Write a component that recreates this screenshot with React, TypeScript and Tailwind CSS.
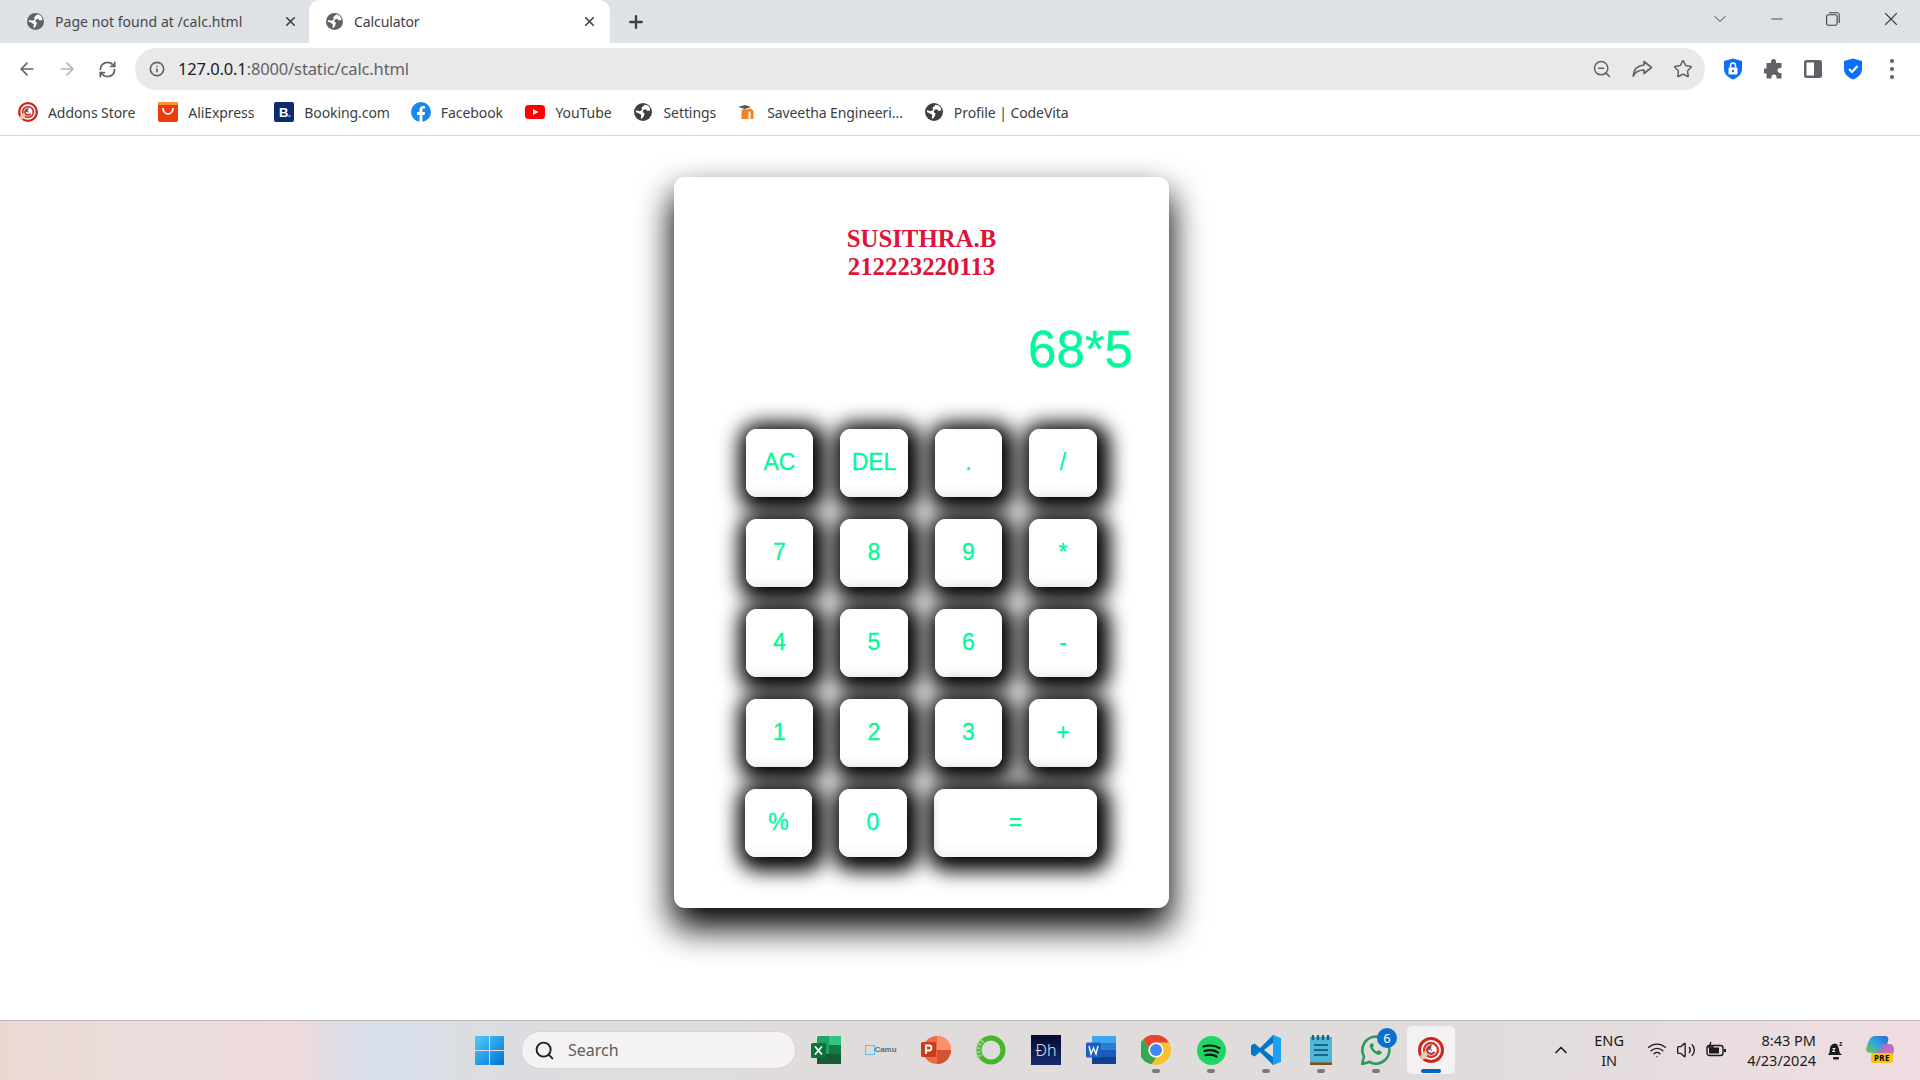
import { ArrowLeft, ArrowRight, RefreshCw, Info, ZoomOut, Star, X, Plus, ChevronDown, ChevronUp, Minus, Search, Wifi, Volume2 } from 'lucide-react'
import type { ReactNode } from 'react'

const Globe = ({ color = '#5f6368', size = 17 }: { color?: string; size?: number }) => (
  <svg width={size} height={size} viewBox="0 0 16 16" className="shrink-0">
    <circle cx="8" cy="8" r="8" fill={color} />
    <path d="M9.500 1.500c3 0 5 2.500 5 5l-2.500.5-1.500-1.500-2 .5-.8 2 1.800 1.500-1 2.500-1.500 2-1-.5.500-3-2.500-1.500-2.500-1 .5-1.500 3 .8L7.500 6 6.500 4.500z" fill="#fff" />
  </svg>
)

const tile = 'w-[48px] h-[48px] flex items-center justify-center relative shrink-0'

const Pip = () => <div className="absolute bottom-[1px] left-[20px] w-[8px] h-[4px] rounded-full bg-[#7b7b7b]"></div>

const AddonsIcon = ({ size }: { size: number }) => (
  <svg width={size} height={size} viewBox="0 0 26 26" className="shrink-0">
    <circle cx="13" cy="13" r="11.500" fill="#fff" stroke="#c9281e" strokeWidth="3" />
    <circle cx="13" cy="13" r="7" fill="none" stroke="#d8382c" strokeWidth="2.400" />
    <path d="M14 6 8 14l6-2-2 6" fill="#2f6fd1" />
    <path d="M2 19l5-5 3 3-3 5-3 1z" fill="#f1c9a0" />
    <path d="M13 9a4 4 0 1 0 3.500 6" fill="none" stroke="#c9281e" strokeWidth="2" />
  </svg>
)

const Bookmark = ({ icon, label, className }: { icon: ReactNode; label: string; className: string }) => (
  <div className={`flex items-center shrink-0 ${className}`}>
    <div className="w-[20px] flex justify-center shrink-0">{icon}</div>
    <span className="ml-[10px] whitespace-nowrap">{label}</span>
  </div>
)

const Shield = ({ children }: { children: ReactNode }) => (
  <svg width="20" height="22" viewBox="0 0 20 22" className="shrink-0">
    <path d="M10 0.500 19 3v8c0 5-4 8.500-9 10.500C5 19.500 1 16 1 11V3z" fill="#0b6ffa" />
    {children}
  </svg>
)

const Key = ({ label, className = '' }: { label: string; className?: string }) => (
  <button className={`h-[68px] pb-[2px] rounded-[11px] bg-gradient-to-b from-white from-80% to-[#f6f6f6] text-[23px] text-[#00fa9a] [-webkit-text-stroke:0.3px_#00fa9a] shadow-[3px_4px_20px_10px_#000] ${className}`}>
    {label}
  </button>
)

export default function App() {
  return (
    <div className="w-[1920px] h-[1080px] flex flex-col overflow-hidden bg-white [font-family:'Noto_Sans',sans-serif]">
      {/* tab strip */}
      <div className="h-[43px] bg-[#dee1e6] flex shrink-0">
        <div className="w-[309px] pl-[27px] flex items-center text-[14px] text-[#45474a] tracking-[0.05px]">
          <Globe />
          <span className="ml-[11px] whitespace-nowrap">Page not found at /calc.html</span>
          <X size={15} strokeWidth={2.600} className="ml-auto mr-[11px] text-[#3c4043]" />
        </div>
        <div className="w-[301px] pl-[17px] flex items-center bg-white rounded-t-[11px] text-[14px] text-[#3c4043] tracking-[-0.1px]">
          <Globe />
          <span className="ml-[11px]">Calculator</span>
          <X size={15} strokeWidth={2.600} className="ml-auto mr-[13px] text-[#3c4043]" />
        </div>
        <Plus size={20} strokeWidth={2.800} className="ml-[16px] self-center text-[#3c4043]" />
        <div className="ml-auto flex items-center h-[37px] text-[#3c4043]">
          <ChevronDown size={20} strokeWidth={1.200} />
          <Minus size={18} strokeWidth={1.200} className="ml-[38px]" />
          <svg width="14" height="14" viewBox="0 0 14 14" className="ml-[40px]" fill="none" stroke="#3c4043" strokeWidth="1.100">
            <rect x="0.600" y="2.800" width="10.500" height="10.500" rx="1.800" />
            <path d="M3 0.800h8.200a2 2 0 0 1 2 2V11" />
          </svg>
          <X size={22} strokeWidth={1.200} className="ml-[40px] mr-[18px]" />
        </div>
      </div>

      {/* toolbar */}
      <div className="h-[52px] flex items-center shrink-0">
        <div className="w-[135px] pl-[17px] flex items-center shrink-0">
          <ArrowLeft size={20} strokeWidth={2} className="text-[#5f6368]" />
          <ArrowRight size={20} strokeWidth={2} className="ml-[20px] text-[#b3b5b8]" />
          <RefreshCw size={19} strokeWidth={2.200} className="ml-[21px] text-[#5f6368]" />
        </div>
        <div className="w-[1570px] h-[42px] rounded-full bg-[#e9e9e9] flex items-center pl-[14px] pr-[12px] shrink-0">
          <Info size={16} strokeWidth={2.400} className="text-[#5f6368]" />
          <span className="ml-[13px] text-[16.500px] tracking-[-0.14px] text-[#202124]">
            127.0.0.1<span className="text-[#5f6368]">:8000/static/calc.html</span>
          </span>
          <ZoomOut size={20} strokeWidth={1.800} className="ml-auto text-[#5f6368]" />
          <svg width="21" height="18" viewBox="0 0 21 18" className="ml-[20px]" fill="none" stroke="#5f6368" strokeWidth="1.700" strokeLinejoin="round">
            <path d="M12 1.500 19.500 7.500 12 13.500V10C7 10 3.500 11.500 1.200 16 1.800 9.500 5.500 5.500 12 5z" />
          </svg>
          <Star size={20} strokeWidth={1.800} className="ml-[20px] text-[#5f6368]" />
        </div>
        <div className="flex items-center ml-[18px]">
          <Shield>
            <rect x="5.500" y="9.500" width="9" height="7" rx="1" fill="#fff" />
            <path d="M7.500 9.500V7.500a2.500 2.500 0 0 1 5 0v2" fill="none" stroke="#fff" strokeWidth="1.500" />
            <circle cx="10" cy="13" r="1.200" fill="#0b6ffa" />
          </Shield>
          <svg width="20" height="20" viewBox="0 0 20 20" className="ml-[21px]">
            <path d="M7 2.500a2.500 2.500 0 0 1 5 0V4h5.500v5H16a2.500 2.500 0 0 0 0 5h1.500v5.500h-5V18a2.500 2.500 0 0 0-5 0v1.500H2.500v-5H1a2.500 2.500 0 0 1 0-5h1.500V4H7z" fill="#5f6368" />
          </svg>
          <svg width="18" height="18" viewBox="0 0 18 18" className="ml-[20px]">
            <rect width="18" height="18" rx="2.500" fill="#5f6368" />
            <rect x="2.500" y="2.500" width="7.500" height="13" fill="#fff" />
          </svg>
          <div className="ml-[21px] flex">
            <Shield>
              <path d="M6 11l3 3 5.500-6" fill="none" stroke="#fff" strokeWidth="2" />
            </Shield>
          </div>
          <div className="ml-[27px] flex flex-col gap-[4px]">
            <div className="w-[4px] h-[4px] rounded-full bg-[#5f6368]"></div>
            <div className="w-[4px] h-[4px] rounded-full bg-[#5f6368]"></div>
            <div className="w-[4px] h-[4px] rounded-full bg-[#5f6368]"></div>
          </div>
        </div>
      </div>

      {/* bookmarks */}
      <div className="h-[41px] pb-[6px] border-b border-[#d3d5d8] flex items-center text-[14px] text-[#3c4043] tracking-[-0.08px] shrink-0">
        <Bookmark className="ml-[18px]" label="Addons Store" icon={<AddonsIcon size={20} />} />
        <Bookmark
          className="ml-[23px]"
          label="AliExpress"
          icon={
            <svg width="20" height="20" viewBox="0 0 20 20">
              <rect width="20" height="20" rx="2" fill="#ee3a0c" />
              <rect width="20" height="3" rx="1" fill="#f7942e" />
              <path d="M5 6c0 8 10 8 10 0" fill="none" stroke="#fff" strokeWidth="1.800" />
            </svg>
          }
        />
        <Bookmark
          className="ml-[20px]"
          label="Booking.com"
          icon={
            <svg width="20" height="20" viewBox="0 0 20 20">
              <rect width="20" height="20" rx="2" fill="#0c2a70" />
              <text x="5" y="15" fill="#fff" fontSize="13" fontWeight="700" fontFamily="Liberation Sans">B</text>
              <circle cx="15.500" cy="14" r="1.300" fill="#3ba7ec" />
            </svg>
          }
        />
        <Bookmark
          className="ml-[21px]"
          label="Facebook"
          icon={
            <svg width="20" height="20" viewBox="0 0 20 20">
              <circle cx="10" cy="10" r="10" fill="#1a87f0" />
              <path d="M8.500 20v-7H6v-3h2.500V7.700C8.500 5.200 10 4 12.100 4c1 0 1.900.2 1.900.2v2.400h-1.100c-1.100 0-1.500.7-1.500 1.400V10H14l-.4 3h-2.200v7z" fill="#fff" />
            </svg>
          }
        />
        <Bookmark
          className="ml-[22.500px]"
          label="YouTube"
          icon={
            <svg width="20" height="20" viewBox="0 0 20 20">
              <rect y="3" width="20" height="14" rx="3.500" fill="#f00" />
              <path d="M8 7l5.500 3L8 13z" fill="#fff" />
            </svg>
          }
        />
        <Bookmark className="ml-[22px]" label="Settings" icon={<Globe color="#3c4043" size={18} />} />
        <Bookmark
          className="ml-[21px]"
          label="Saveetha Engineeri..."
          icon={
            <svg width="20" height="20" viewBox="0 0 20 20">
              <path d="M1 5l7-2 6 2-6 2z" fill="#555" />
              <path d="M6 17V10c0-2 3-2 3 0v7M10 17V10c0-2 4-3 5 0v7" fill="none" stroke="#f58220" strokeWidth="3" />
            </svg>
          }
        />
        <Bookmark className="ml-[21px]" label="Profile | CodeVita" icon={<Globe color="#3c4043" size={18} />} />
      </div>

      {/* page */}
      <div className="flex-1 pt-[41px] pl-[674px]">
        <div className="w-[495px] h-[731px] bg-white rounded-[11px] shadow-[0_18px_34px_2px_#000] pt-[48px] flex flex-col">
          <div className="[font-family:'Liberation_Serif',serif] font-bold text-[24.800px] leading-[28px] text-[#dc143c] text-center">
            <div>SUSITHRA.B</div>
            <div>212223220113</div>
          </div>
          <div className="mt-[39px] h-[60px] pr-[36px] text-right text-[51px] leading-[60px] text-[#00fa9a] [-webkit-text-stroke:0.3px_#00fa9a] [font-family:'Liberation_Sans',sans-serif]">
            68*5
          </div>
          <div className="mt-[49px] ml-[72px] grid grid-cols-[67px_68px_67px_68px] gap-x-[27px] gap-y-[22px] w-[351px] [font-family:'Liberation_Sans',sans-serif]">
            <Key label="AC" />
            <Key label="DEL" />
            <Key label="." />
            <Key label="/" />
            <Key label="7" />
            <Key label="8" />
            <Key label="9" />
            <Key label="*" />
            <Key label="4" />
            <Key label="5" />
            <Key label="6" />
            <Key label="-" />
            <Key label="1" />
            <Key label="2" />
            <Key label="3" />
            <Key label="+" />
            <Key label="%" className="-translate-x-px" />
            <Key label="0" className="-translate-x-px" />
            <Key label="=" className="col-span-2 -ml-px" />
          </div>
        </div>
      </div>

      {/* taskbar */}
      <div className="h-[60px] shrink-0 border-t border-[#bdb9ba] pb-[1px] bg-[linear-gradient(90deg,#ead9d2_0px,#ecdcdb_130px,#ecdadc_300px,#d9dfeb_360px,#d9dfeb_420px,#dcdde2_460px,#e0dcdb_800px,#e1dcdc_1500px,#efdde1_1900px)] flex items-center pl-[465px]">
        <div className={tile}>
          <svg width="29" height="29" viewBox="0 0 29 29">
            <defs>
              <linearGradient id="win" x1="0" y1="0" x2="1" y2="1">
                <stop offset="0" stopColor="#4fcbfa" />
                <stop offset="1" stopColor="#0172d4" />
              </linearGradient>
            </defs>
            <path d="M0 1a1 1 0 0 1 1-1h13v14H0zM15 0h13a1 1 0 0 1 1 1v13H15zM0 15h14v14H1a1 1 0 0 1-1-1zM15 15h14v13a1 1 0 0 1-1 1H15z" fill="url(#win)" />
          </svg>
        </div>
        <div className="ml-[8px] w-[275px] h-[38px] rounded-full bg-[#f4f2f2] border border-[#d8d4d4] flex items-center pl-[12px] text-[16px] text-[#5d5d5d]">
          <Search size={21} strokeWidth={2.200} className="text-[#222]" />
          <span className="ml-[13px]">Search</span>
        </div>
        <div className="ml-[6px] flex gap-[7px]">
          <div className={tile}>
            <svg width="30" height="28" viewBox="0 0 30 28">
              <rect x="6" width="24" height="28" rx="1.500" fill="#21a366" />
              <rect x="18" width="12" height="9" fill="#33c481" />
              <rect x="6" y="18" width="24" height="10" fill="#185c37" />
              <rect x="18" y="9" width="12" height="9" fill="#107c41" />
              <rect y="7" width="15" height="15" rx="1.500" fill="#0f7038" />
              <path d="M4 10.500l7 8M11 10.500l-7 8" stroke="#fff" strokeWidth="1.800" />
            </svg>
          </div>
          <div className={tile}>
            <div className="flex items-center">
              <div className="w-[10px] h-[10px] border border-[#5ebcf0]"></div>
              <span className="-ml-[1px] text-[8px] font-bold leading-none text-[#4c6d8c] [font-family:'Liberation_Sans',sans-serif]">Camu</span>
            </div>
          </div>
          <div className={tile}>
            <svg width="30" height="28" viewBox="0 0 30 28">
              <circle cx="16" cy="14" r="14" fill="#ed6c47" />
              <path d="M16 0a14 14 0 0 1 14 14H16z" fill="#ff8f6b" />
              <path d="M16 14h14a14 14 0 0 1-14 14z" fill="#d35230" />
              <rect y="6" width="15" height="15" rx="1.500" fill="#c43e1c" />
              <path d="M5 18V9.500h3a2.500 2.500 0 0 1 0 5H5" fill="none" stroke="#fff" strokeWidth="1.800" />
            </svg>
          </div>
          <div className={tile}>
            <svg width="30" height="30" viewBox="0 0 30 30">
              <circle cx="15" cy="15" r="12" fill="none" stroke="#46b52c" strokeWidth="5" />
              <path d="M4 22A13 13 0 0 1 7 5" fill="none" stroke="#8fd07c" strokeWidth="5" strokeDasharray="2.500 1.500" />
            </svg>
          </div>
          <div className={tile}>
            <div className="w-[30px] h-[30px] bg-gradient-to-b from-[#060c2e] to-[#172b70] flex items-center justify-center text-[#dfe6f5] text-[16px] font-light leading-none">
              Ðh
            </div>
          </div>
          <div className={tile}>
            <svg width="30" height="28" viewBox="0 0 30 28">
              <rect x="6" width="24" height="28" rx="1.500" fill="#2b7cd3" />
              <rect x="6" width="24" height="7" fill="#41a5ee" />
              <rect x="6" y="14" width="24" height="7" fill="#185abd" />
              <rect x="6" y="21" width="24" height="7" fill="#103f91" />
              <rect y="6.500" width="15" height="15" rx="1.500" fill="#1e5fc0" />
              <path d="M3 10l2 8 2.500-6 2.500 6 2-8" fill="none" stroke="#fff" strokeWidth="1.400" />
            </svg>
          </div>
          <div className={tile}>
            <svg width="30" height="30" viewBox="0 0 30 30">
              <circle cx="15" cy="15" r="15" fill="#fbc02d" />
              <path d="M15 0a15 15 0 0 1 13 7.500H15a7.500 7.500 0 0 0-7 4.800L2 4.500A15 15 0 0 1 15 0z" fill="#e94335" />
              <path d="M2 4.500l6 8a7.500 7.500 0 0 0 7 10.200L10.500 29.300A15 15 0 0 1 2 4.500z" fill="#35a853" />
              <circle cx="15" cy="15" r="7.500" fill="#fff" />
              <circle cx="15" cy="15" r="6" fill="#4285f4" />
            </svg>
            <Pip />
          </div>
          <div className={tile}>
            <svg width="29" height="29" viewBox="0 0 29 29">
              <circle cx="14.500" cy="14.500" r="14.500" fill="#1ed760" />
              <path d="M6.500 10.500c6-1.800 11.500-1 16 1.500M7.500 15c5-1.400 10-.7 13.500 1.500M8.500 19.200c4-1 8-.6 11 1.300" fill="none" stroke="#111" strokeWidth="2.200" strokeLinecap="round" />
            </svg>
            <Pip />
          </div>
          <div className={tile}>
            <svg width="30" height="30" viewBox="0 0 30 30">
              <path d="M22 0l8 3.500v23L22 30 9 17l-5.500 4.500L0 19.500v-9L3.500 8.500 9 13z" fill="#0078c8" />
              <path d="M22 0l8 3.500v23L22 30z" fill="#1fa0f0" />
              <path d="M22 8 13 15l9 7z" fill="#e3dedd" />
            </svg>
            <Pip />
          </div>
          <div className={tile}>
            <svg width="22" height="30" viewBox="0 0 22 30">
              <rect y="2" width="22" height="27" fill="#4fb6d8" />
              <rect y="27.500" width="22" height="2.500" fill="#8a4a14" />
              <path d="M3 1v3M8 1v3M13 1v3M18 1v3" stroke="#1e6680" strokeWidth="2.500" strokeLinecap="round" />
              <path d="M4 10h14M4 15h14M4 20h14" stroke="#15688a" strokeWidth="2" />
            </svg>
            <Pip />
          </div>
          <div className={tile}>
            <svg width="30" height="30" viewBox="0 0 30 30">
              <path d="M1 29l2-7.500A13.500 13.500 0 1 1 8.500 27z" fill="none" stroke="#2c9a5f" strokeWidth="2.600" />
              <path d="M10 8.500c-2 1.500-1.500 4 1 7s5.500 5 8 4c1.500-.6 2-2 1.500-2.800l-3-1.700-1.500 1.500c-2-.8-3.500-2.500-4.300-4.300l1.300-1.400L11.500 8z" fill="#2c9a5f" />
            </svg>
            <div className="absolute top-[2px] left-[25px] w-[20px] h-[20px] rounded-full bg-[#0a70cf] text-white text-[13px] leading-[20px] text-center">6</div>
            <Pip />
          </div>
          <div className={`${tile} rounded-[5px] bg-[#f4f1f2]`}>
            <AddonsIcon size={26} />
            <div className="absolute bottom-[1px] left-[14px] w-[20px] h-[4px] rounded-full bg-[#0067c0]"></div>
          </div>
        </div>

        {/* system tray */}
        <div className="ml-auto flex items-center text-[#1b1b1b] text-[14.500px] leading-[20px]">
          <ChevronUp size={20} strokeWidth={2} />
          <div className="ml-[18px] w-[40px] text-center">
            <div>ENG</div>
            <div>IN</div>
          </div>
          <Wifi size={20} strokeWidth={1.600} className="ml-[18px]" />
          <Volume2 size={20} strokeWidth={1.600} className="ml-[9px]" />
          <svg width="20" height="16" viewBox="0 0 20 16" className="ml-[10px]" fill="none" stroke="#1b1b1b" strokeWidth="1.400">
            <rect x="1" y="3.500" width="16" height="10" rx="2.500" />
            <rect x="3" y="5.500" width="10" height="6" fill="#1b1b1b" stroke="none" />
            <path d="M19 7v3" strokeWidth="2" />
            <path d="M5 0 3 5h4l-2 5" strokeWidth="1.400" />
          </svg>
          <div className="ml-[21px] text-right whitespace-nowrap">
            <div>8:43 PM</div>
            <div>4/23/2024</div>
          </div>
          <svg width="18" height="20" viewBox="0 0 18 20" className="ml-[11px]">
            <path d="M1 15c2-2 1.500-4 2-7a5 5 0 0 1 7-4l2 5c0 3 1 4 3 6z" fill="#1b1b1b" />
            <rect x="6" y="17" width="6" height="2.500" rx="1" fill="#1b1b1b" />
            <text x="5" y="12" fontSize="7" fontWeight="700" fill="#fff" fontFamily="Liberation Sans">z</text>
            <text x="12" y="6" fontSize="7" fontWeight="700" fill="#1b1b1b" fontFamily="Liberation Sans">z</text>
          </svg>
          <div className="ml-[20px] mr-[25px] relative w-[30px] h-[30px]">
            <svg width="30" height="26" viewBox="0 0 30 26">
              <defs>
                <linearGradient id="cpa" x1="0" y1="1" x2="1" y2="0">
                  <stop offset="0" stopColor="#7cc63f" />
                  <stop offset="0.500" stopColor="#2ba9e0" />
                  <stop offset="1" stopColor="#3560d9" />
                </linearGradient>
                <linearGradient id="cpb" x1="0" y1="0" x2="1" y2="1">
                  <stop offset="0" stopColor="#8a6fe0" />
                  <stop offset="1" stopColor="#f2709c" />
                </linearGradient>
              </defs>
              <path d="M10 1h10c2 0 3 1 3.500 3L20 18H6c-3 0-5-1-5-4C3 7 5 1 10 1z" fill="url(#cpa)" />
              <path d="M18 9h7c3 0 4 3 4 7-1 5-4 8-8 8H12c-2 0-3-1-3-3z" fill="url(#cpb)" />
            </svg>
            <div className="absolute left-[6px] top-[18px] w-[22px] h-[10px] rounded-[2px] bg-[#f8c515] text-[8px] leading-[10px] font-bold text-center text-black tracking-[0.5px]">PRE</div>
          </div>
        </div>
      </div>
    </div>
  )
}
